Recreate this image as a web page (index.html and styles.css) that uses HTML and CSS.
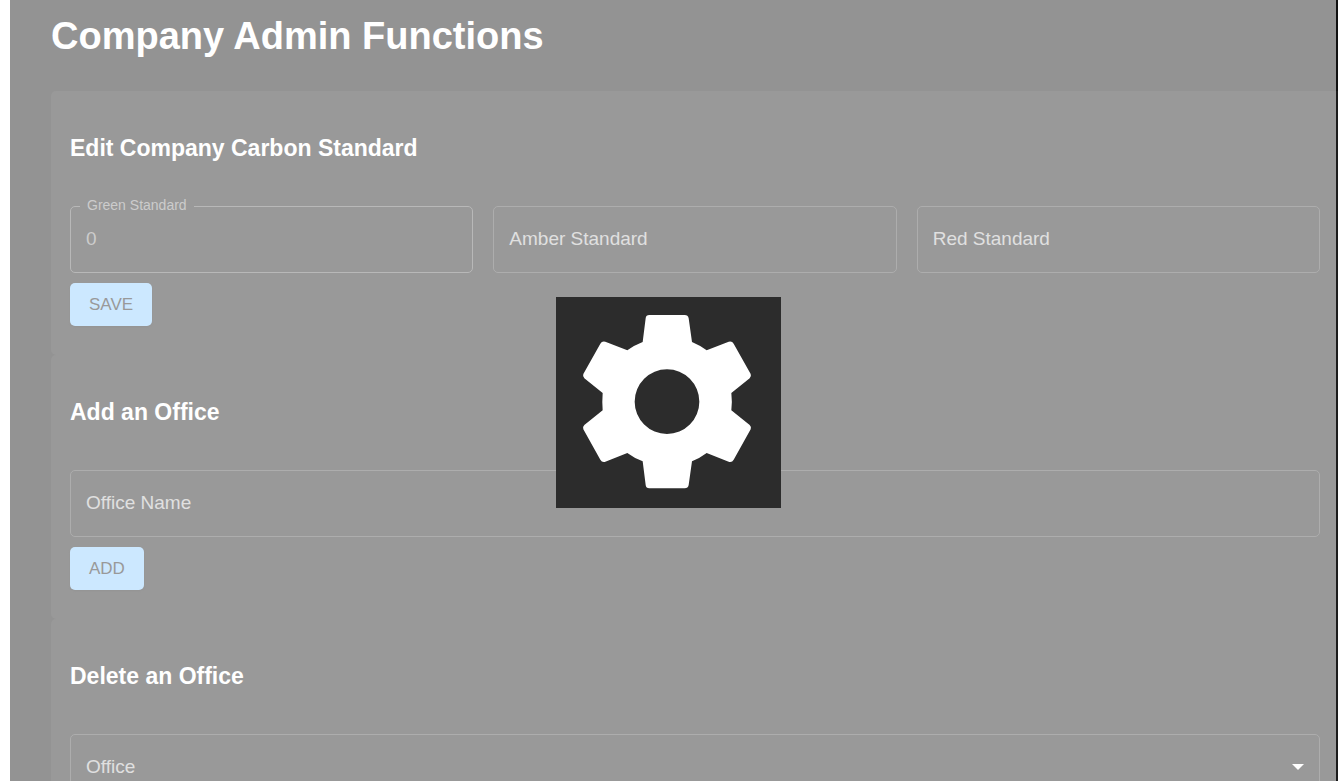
FILE: index.html
```html
<!DOCTYPE html>
<html lang="en">
<head>
<meta charset="utf-8">
<title>Company Admin Functions</title>
<link rel="stylesheet" href="styles.css">
</head>
<body>
<div class="app">
  <main class="content">
    <h1 class="page-title">Company Admin Functions</h1>
    <form class="card">
      <h2 class="card-title">Edit Company Carbon Standard</h2>
      <div class="fields">
        <div class="field field-active">
          <input class="control" id="green" type="text" value="0">
          <label class="label" for="green">Green Standard</label>
        </div>
        <div class="field">
          <input class="control" id="amber" type="text">
          <label class="label" for="amber">Amber Standard</label>
        </div>
        <div class="field">
          <input class="control" id="red" type="text">
          <label class="label" for="red">Red Standard</label>
        </div>
      </div>
      <button class="button" type="button">SAVE</button>
    </form>
    <form class="card">
      <h2 class="card-title">Add an Office</h2>
      <div class="fields">
        <div class="field">
          <input class="control" id="office-name" type="text">
          <label class="label" for="office-name">Office Name</label>
        </div>
      </div>
      <button class="button" type="button">ADD</button>
    </form>
    <form class="card">
      <h2 class="card-title">Delete an Office</h2>
      <div class="fields">
        <div class="field">
          <select class="control" id="office"><option value=""></option></select>
          <label class="label" for="office">Office</label>
          <svg class="arrow" viewBox="0 0 12 6" aria-hidden="true"><path d="M0 0h12L6 6z"/></svg>
        </div>
      </div>
    </form>
  </main>
  <div class="edge"></div>
</div>
<div class="overlay" role="status" aria-label="Loading">
  <svg class="gear" viewBox="48 51 675 633" aria-hidden="true">
    <path fill-rule="evenodd" d="M308 186L317 115Q318 105 328 105H434Q444 105 446 115L456 186Q480 196 500 211L566 185Q576 182 581 191L632 282Q635 290 629 295L574 339Q577 365 574 391L629 435Q635 440 632 448L581 539Q576 548 566 545L500 519Q480 534 456 544L446 615Q444 625 434 625H328Q318 625 317 615L308 544Q282 534 262 519L196 545Q186 548 181 539L130 448Q127 440 133 435L188 391Q186 365 188 339L133 295Q127 290 130 282L181 191Q186 182 196 185L262 211Q282 196 308 186ZM381 268A97 97 0 1 0 381 462A97 97 0 1 0 381 268Z"/>
  </svg>
</div>
</body>
</html>
```
FILE: styles.css
```css
* {
  box-sizing: border-box;
}

body {
  margin: 0;
  background: #fff;
  color: #fff;
  font-family: "Liberation Sans", Arial, sans-serif;
}

.app {
  display: flex;
  height: 100vh;
  padding-left: 10px;
  overflow: hidden;
}

.content {
  flex: 1;
  padding-left: 41px;
  background: #939393;
}

.edge {
  width: 2px;
  background: linear-gradient(#111 91px, #1c1c1c 91px);
}

.page-title {
  margin: 0;
  padding: 14px 0 33px;
  font-size: 38px;
  line-height: 44px;
}

.card {
  padding: 44px 16px 29px 19px;
  border-radius: 5px 0 0 5px;
  background: #999;
}

.card-title {
  margin: 0 0 45px;
  font-size: 23px;
  line-height: 26px;
}

.fields {
  display: flex;
  gap: 20px;
  margin-bottom: 10px;
}

.field {
  position: relative;
  flex: 1;
}

.control {
  display: block;
  width: 100%;
  height: 67px;
  padding: 0 15px 2px;
  border: 1px solid #adadad;
  border-radius: 5px;
  outline: 0;
  appearance: none;
  background: transparent;
  color: #ccc;
  font: inherit;
  font-size: 19px;
}

.label {
  position: absolute;
  top: 22px;
  left: 16px;
  color: #e0e0e0;
  font-size: 19px;
  line-height: 22px;
  pointer-events: none;
}

.field-active .control {
  border-color: #b8b8b8;
}

.field-active .label {
  top: -10px;
  left: 10px;
  padding: 0 7px;
  background: #999;
  color: #ccc;
  font-size: 14px;
  line-height: 18px;
}

.arrow {
  position: absolute;
  top: 30px;
  right: 16px;
  width: 12px;
  height: 6px;
  fill: #fff;
  pointer-events: none;
}

.button {
  display: block;
  height: 43px;
  padding: 0 19px;
  border: 0;
  border-radius: 5px;
  background: #cce8ff;
  box-shadow: 0 1px 2px #949494;
  color: #999;
  font: inherit;
  font-size: 17px;
}

.overlay {
  position: fixed;
  inset: 0;
  display: grid;
  place-items: center;
  padding: 24px 2px 0 0;
  pointer-events: none;
}

.gear {
  width: 225px;
  height: 211px;
  background: #2c2c2c;
  fill: #fff;
}
```
